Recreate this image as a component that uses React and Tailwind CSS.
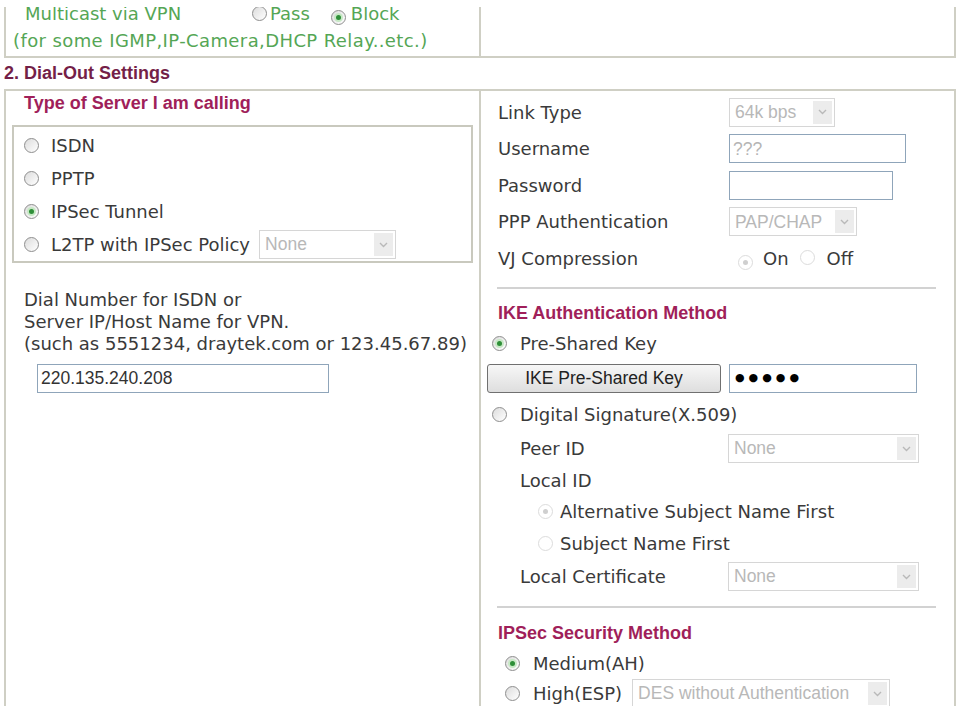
const SANS = "font-['DejaVu_Sans',sans-serif]";
const ARIAL = "font-['Liberation_Sans',Arial,sans-serif]";

function Radio({ checked, disabled }) {
  if (disabled) {
    return (
      <span className="inline-flex h-[15px] w-[15px] shrink-0 items-center justify-center rounded-full border border-[#dcdcdc] bg-white">
        {checked && <span className="h-[5px] w-[5px] rounded-full bg-[#cfcfcf]" />}
      </span>
    );
  }
  return (
    <span className="inline-flex h-[15px] w-[15px] shrink-0 items-center justify-center rounded-full border border-[#8e8e8e] bg-linear-to-br from-[#dcdcdc] to-white">
      {checked && (
        <span className="flex h-[9px] w-[9px] items-center justify-center rounded-full bg-[#c6e8c4]">
          <span className="h-[5px] w-[5px] rounded-full bg-[#2e8f38]" />
        </span>
      )}
    </span>
  );
}

function Select({ value, className = "" }) {
  return (
    <div className={`flex h-[29px] items-center border border-[#d6d6d6] bg-white ${className}`}>
      <span className={`${ARIAL} min-w-0 flex-1 truncate pl-[5px] text-[17.5px] text-[#b8b8b8]`}>{value}</span>
      <span className="m-[2px] flex h-[23px] w-[19px] items-center justify-center bg-[#ececec]">
        <svg width="9" height="6" viewBox="0 0 9 6" fill="none">
          <path d="M1 1l3.5 3.5L8 1" stroke="#b9b9b9" strokeWidth="1.4" />
        </svg>
      </span>
    </div>
  );
}

function Input({ value, muted, className = "" }) {
  return (
    <div className={`flex h-[29px] items-center border border-[#8fa5ba] bg-white pl-[3px] ${ARIAL} text-[17.5px] ${muted ? "text-[#b5b5b5]" : "text-[#333]"} ${className}`}>
      {value}
    </div>
  );
}

function Heading({ children, className = "" }) {
  return (
    <div className={`flex h-[24px] items-center ${ARIAL} text-[18px] font-bold text-[#a01f5a] ${className}`}>
      {children}
    </div>
  );
}

function FormRow({ label, children }) {
  return (
    <div className="flex h-[36.5px] items-center pl-[17px]">
      <span className="w-[231px] shrink-0">{label}</span>
      {children}
    </div>
  );
}

export default function App() {
  return (
    <div className={`h-[706px] w-[957px] overflow-hidden bg-white ${SANS} text-[18px] text-[#3a3a3a]`}>
      {/* tabla anterior (cortada arriba) */}
      <div className="ml-[4px] mt-[7px] grid h-[51px] w-[952px] grid-cols-[473px_1fr] overflow-hidden border-x-2 border-b-2 border-[#cfcfc4]">
        <div className="text-[#55a655]">
          <div className="-mt-[8px] flex h-[28px] items-center pl-[19px]">
            <span className="w-[227px]">Multicast via VPN</span>
            <Radio />
            <span className="ml-[3px]">Pass</span>
            <span className="ml-[21px]"><Radio checked /></span>
            <span className="ml-[5px]">Block</span>
          </div>
          <div className="flex h-[27px] items-center pl-[7px] tracking-[0.4px]">(for some IGMP,IP-Camera,DHCP Relay..etc.)</div>
        </div>
        <div className="border-l-2 border-[#cfcfc4]" />
      </div>

      <div className={`flex h-[31px] items-center pl-[4px] ${ARIAL} text-[18px] font-bold text-[#741f48]`}>
        2. Dial-Out Settings
      </div>

      <div className="ml-[4px] grid h-[640px] w-[952px] grid-cols-[473px_1fr] border-2 border-b-0 border-[#cfcfc4]">
        {/* columna izquierda */}
        <div>
          <Heading className="pl-[18px]">Type of Server I am calling</Heading>
          <div className="ml-[6px] mt-[10px] w-[461px] border-2 border-[#c9c9be] pt-[2px]">
            {["ISDN", "PPTP", "IPSec Tunnel"].map((t) => (
              <div key={t} className="flex h-[33px] items-center gap-[12px] pl-[10px]">
                <Radio checked={t === "IPSec Tunnel"} />
                <span>{t}</span>
              </div>
            ))}
            <div className="flex h-[33px] items-center pl-[10px]">
              <Radio />
              <span className="ml-[12px]">L2TP with IPSec Policy</span>
              <Select value="None" className="ml-[9px] w-[137px]" />
            </div>
          </div>
          <div className="mt-[26px] pl-[18px] leading-[22px]">
            <div>Dial Number for ISDN or</div>
            <div>Server IP/Host Name for VPN.</div>
            <div>(such as 5551234, draytek.com or 123.45.67.89)</div>
          </div>
          <Input value="220.135.240.208" className="ml-[31px] mt-[9px] w-[292px]" />
        </div>

        {/* columna derecha */}
        <div className="border-l-2 border-[#cfcfc4]">
          <div className="pt-[3px]">
            <FormRow label="Link Type"><Select value="64k bps" className="h-[28px] w-[106px]" /></FormRow>
            <FormRow label="Username"><Input value="???" muted className="w-[177px]" /></FormRow>
            <FormRow label="Password"><Input value="" className="w-[164px]" /></FormRow>
            <FormRow label="PPP Authentication"><Select value="PAP/CHAP" className="w-[128px]" /></FormRow>
            <FormRow label="VJ Compression">
              <span className="ml-[9px]"><Radio checked disabled /></span>
              <span className="ml-[10px]">On</span>
              <span className="ml-[11px]"><Radio disabled /></span>
              <span className="ml-[12px]">Off</span>
            </FormRow>
          </div>
          <div className="ml-[16px] mr-[18px] mt-[10px] h-[2px] bg-[#d2d2d2]" />

          <Heading className="mt-[13px] pl-[17px]">IKE Authentication Method</Heading>
          <div className="mt-[3px] flex h-[30px] items-center gap-[13px] pl-[11px]">
            <Radio checked />
            <span>Pre-Shared Key</span>
          </div>
          <div className="mt-[5px] flex items-center pl-[6px]">
            <button className={`flex h-[29px] w-[234px] items-center justify-center rounded-[3px] border border-[#707070] bg-linear-to-b from-[#f7f7f7] to-[#dedede] ${ARIAL} text-[17.5px] text-[#222]`}>
              IKE Pre-Shared Key
            </button>
            <div className="ml-[8px] flex h-[29px] w-[188px] items-center border border-[#8fa5ba] bg-white pl-[5px] text-[11px] tracking-[4px] text-black">
              ●●●●●
            </div>
          </div>
          <div className="mt-[7px] flex h-[30px] items-center gap-[13px] pl-[11px]">
            <Radio />
            <span>Digital Signature(X.509)</span>
          </div>
          <div className="mt-[2px] flex h-[34px] items-center pl-[39px]">
            <span className="w-[208px] shrink-0">Peer ID</span>
            <Select value="None" className="w-[191px]" />
          </div>
          <div className="flex h-[30px] items-center pl-[39px]">Local ID</div>
          <div className="flex h-[32px] items-center gap-[7px] pl-[57px]">
            <Radio checked disabled />
            <span>Alternative Subject Name First</span>
          </div>
          <div className="flex h-[32px] items-center gap-[7px] pl-[57px]">
            <Radio disabled />
            <span>Subject Name First</span>
          </div>
          <div className="flex h-[34px] items-center pl-[39px]">
            <span className="w-[208px] shrink-0">Local Certificate</span>
            <Select value="None" className="w-[191px]" />
          </div>
          <div className="ml-[16px] mr-[18px] mt-[12px] h-[2px] bg-[#d2d2d2]" />

          <Heading className="mt-[14px] pl-[17px]">IPSec Security Method</Heading>
          <div className="mt-[3px] flex h-[30px] items-center gap-[13px] pl-[24px]">
            <Radio checked />
            <span>Medium(AH)</span>
          </div>
          <div className="flex h-[30px] items-center pl-[24px]">
            <Radio />
            <span className="ml-[13px]">High(ESP)</span>
            <Select value="DES without Authentication" className="ml-[10px] w-[258px]" />
          </div>
        </div>
      </div>
    </div>
  );
}
